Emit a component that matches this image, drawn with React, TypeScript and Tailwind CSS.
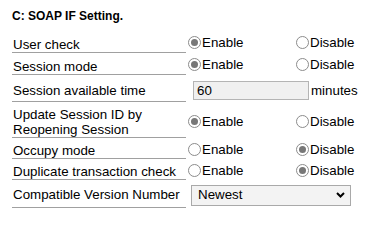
import React from "react";

function Radio({ checked, label }: { checked: boolean; label: string }) {
  return (
    <span className="flex items-center">
      <span className="flex h-[13px] w-[13px] items-center justify-center rounded-full border border-[#8c8c8c] bg-white">
        {checked && <span className="h-[7px] w-[7px] rounded-full bg-[#777777]" />}
      </span>
      <span className="ml-[1px]">{label}</span>
    </span>
  );
}

function RadioPair({ enabled }: { enabled: boolean }) {
  return (
    <div className="flex items-center">
      <div className="w-[108px]">
        <Radio checked={enabled} label="Enable" />
      </div>
      <Radio checked={!enabled} label="Disable" />
    </div>
  );
}

function Row({
  label,
  h,
  pb = "pb-0",
  children,
}: {
  label: React.ReactNode;
  h: string;
  pb?: string;
  children: React.ReactNode;
}) {
  return (
    <div className={`flex ${h}`}>
      <div className={`flex w-[174px] items-end border-b border-[#a0a0a0] pl-[1px] leading-[15px] ${pb}`}>
        <div>{label}</div>
      </div>
      <div className="flex flex-1 items-center pl-[2px]">{children}</div>
    </div>
  );
}

export default function App() {
  return (
    <div
      className="h-[212px] w-[370px] bg-white pl-[12px] pt-[9px] text-black"
      style={{ fontFamily: '"Liberation Sans", Arial, sans-serif' }}
    >
      <div className="text-[12px] font-bold leading-[14px]">C: SOAP IF Setting.</div>
      <div className="mt-[10px] flex flex-col gap-[2px] text-[13.33px]">
        <Row label="User check" h="h-[20px]">
          <RadioPair enabled />
        </Row>
        <Row label="Session mode" h="h-[20px]">
          <RadioPair enabled />
        </Row>
        <Row label="Session available time" h="h-[25px]" pb="pb-[3px]">
          <div className="flex items-center pt-[3px]">
            <div className="ml-[5px] flex h-[19px] w-[116px] items-center border border-[#b4b4b4] bg-[#f0f0f0] pl-[3px]">
              60
            </div>
            <span className="ml-[2px]">minutes</span>
          </div>
        </Row>
        <Row
          label={
            <>
              Update Session ID by
              <br />
              Reopening Session
            </>
          }
          h="h-[34px]"
        >
          <div className="pt-[2px]">
            <RadioPair enabled />
          </div>
        </Row>
        <Row label="Occupy mode" h="h-[19px]">
          <RadioPair enabled={false} />
        </Row>
        <Row label="Duplicate transaction check" h="h-[19px]">
          <RadioPair enabled={false} />
        </Row>
        <Row label="Compatible Version Number" h="h-[26px]" pb="pb-[5px]">
          <div className="ml-[3px] flex h-[21px] w-[160px] items-center justify-between border border-[#a9a9a9] bg-[#f3f3f3] pl-[6px] pr-[5px]">
            <span>Newest</span>
            <svg width="9" height="6" viewBox="0 0 9 6">
              <path d="M1 1 L4.5 4.5 L8 1" stroke="#000" strokeWidth="2" fill="none" />
            </svg>
          </div>
        </Row>
      </div>
    </div>
  );
}
